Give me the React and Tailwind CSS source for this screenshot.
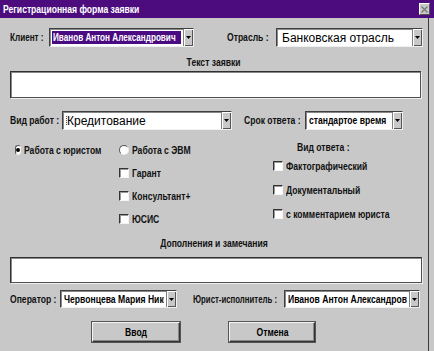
import React from 'react';

const narrow = "font-['Liberation_Sans',sans-serif]";

// condensed bold text, like the old narrow system font
function N({ children, center, sx = 'scale-x-[0.78]' }) {
  return (
    <span
      className={`${narrow} inline-block whitespace-nowrap text-[11px] font-bold leading-none ${sx} ${center ? 'origin-center' : 'origin-left'}`}
    >
      {children}
    </span>
  );
}

function DropBtn() {
  return (
    <div className="w-[10px] shrink-0 bg-[#c8c8c8] border-l border-[#808080] flex items-center justify-center shadow-[inset_1px_1px_0_#fff,inset_-1px_-1px_0_#555]">
      <svg width="5" height="3" viewBox="0 0 5 3">
        <path d="M0 0h5L2.5 3z" fill="#000" />
      </svg>
    </div>
  );
}

function Select({ className, children, purple }) {
  return (
    <div className={`flex h-full bg-white border border-t-[#404040] border-l-[#404040] border-b-[#f0f0f0] border-r-[#f0f0f0] shadow-[inset_1px_1px_0_#888] ${className}`}>
      <div className="flex-1 min-w-0 overflow-hidden flex items-center p-[2px]">
        <div className={`h-full w-full flex items-center px-[1px] whitespace-nowrap overflow-hidden ${purple ? 'bg-[#4a0a82] text-white' : 'text-black'}`}>
          {children}
        </div>
      </div>
      <DropBtn />
    </div>
  );
}

function Label({ className = '', children, center, sx }) {
  return (
    <div className={`text-[#111] flex items-center ${center ? 'justify-center' : ''} ${className}`}>
      <N center={center} sx={sx}>{children}</N>
    </div>
  );
}

function Radio({ checked, label }) {
  return (
    <div className="flex items-center h-[14px] gap-[3px]">
      <div className="w-[10px] h-[10px] rounded-full bg-white border border-t-[#555] border-l-[#555] border-b-[#eee] border-r-[#eee] flex items-center justify-center">
        {checked && <div className="w-[4px] h-[4px] rounded-full bg-black" />}
      </div>
      <Label>{label}</Label>
    </div>
  );
}

function Check({ label }) {
  return (
    <div className="flex items-center h-[14px] gap-[3px]">
      <div className="w-[10px] h-[10px] bg-white border border-t-[#333] border-l-[#333] border-b-[#f4f4f4] border-r-[#f4f4f4] shadow-[inset_1px_1px_0_#999]" />
      <Label>{label}</Label>
    </div>
  );
}

function Field({ className }) {
  return (
    <div className={`bg-white border border-t-[#303030] border-l-[#303030] border-b-[#505050] border-r-[#505050] shadow-[inset_1px_1px_0_#888,1px_1px_0_#eee] ${className}`} />
  );
}

function Button({ className, children }) {
  return (
    <div className={`h-[20px] flex items-center justify-center bg-[#c8c8c8] border border-t-[#f4f4f4] border-l-[#f4f4f4] border-b-[#333] border-r-[#333] shadow-[inset_-1px_-1px_0_#888,0_0_0_1px_#555] ${className}`}>
      <N center>{children}</N>
    </div>
  );
}

export default function App() {
  return (
    <div className="w-[434px] h-[351px] bg-[#c8c8c8] overflow-hidden flex flex-col">
      <div className="h-[18px] shrink-0 bg-[#4c0c7e] flex items-center justify-between pl-[3px] pr-[4px]">
        <div className="text-white flex items-center">
          <N>Регистрационная форма заявки</N>
        </div>
        <div className="w-[11px] h-[12px] bg-[#c8c8c8] border border-t-white border-l-white border-b-[#555] border-r-[#555] flex items-center justify-center">
          <svg width="7" height="7" viewBox="0 0 7 7">
            <path d="M0.5 0.5l6 6M6.5 0.5l-6 6" stroke="#777" strokeWidth="1.2" />
          </svg>
        </div>
      </div>

      <div className="w-[429px] flex-1 border-r border-[#3a3a3a] flex flex-col">
        <div className="flex items-center h-[19px] mt-[10px]">
          <Label className="ml-[10px] w-[39px]" sx="scale-x-[0.74]">Клиент :</Label>
          <Select className="w-[145px]" purple>
            <N sx="scale-x-[0.74]">Иванов Антон Александрович</N>
          </Select>
          <Label className="ml-[33px] w-[49px]">Отрасль :</Label>
          <Select className="w-[147px]">
            <span className="font-['Liberation_Sans',sans-serif] text-[12px] leading-none pl-[2px]">Банковская отрасль</span>
          </Select>
        </div>

        <Label center className="mt-[9px] h-[12px]">Текст заявки</Label>
        <Field className="mt-[3px] ml-[10px] w-[411px] h-[27px]" />

        <div className="flex items-center h-[19px] mt-[13px]">
          <Label className="ml-[10px] w-[52px]">Вид работ :</Label>
          <Select className="w-[170px]">
            <span className="w-[1px] h-[9px] border-l border-dotted border-[#555]" />
            <span className="font-['Liberation_Sans',sans-serif] text-[12px] leading-none">Кредитование</span>
          </Select>
          <Label className="ml-[12px] w-[61px]">Срок ответа :</Label>
          <Select className="w-[98px]">
            <N>стандартое время</N>
          </Select>
        </div>

        <div className="flex mt-[13px] h-[83px]">
          <div className="ml-[15px] w-[104px]">
            <Radio checked label="Работа с юристом" />
          </div>
          <div className="w-[154px] flex flex-col gap-[9px]">
            <Radio label="Работа с ЭВМ" />
            <Check label="Гарант" />
            <Check label="Консультант+" />
            <Check label="ЮСИС" />
          </div>
          <div className="flex flex-col">
            <Label className="ml-[24px] h-[14px] mt-[-3px]">Вид ответа :</Label>
            <div className="flex flex-col gap-[10px] mt-[5px]">
              <Check label="Фактографический" />
              <Check label="Документальный" />
              <Check label="с комментарием юриста" />
            </div>
          </div>
        </div>

        <Label center className="mt-[11px] h-[12px]">Дополнения и замечания</Label>
        <Field className="mt-[8px] ml-[10px] w-[412px] h-[26px]" />

        <div className="flex items-center h-[18px] mt-[7px]">
          <Label className="ml-[10px] w-[50px]">Оператор :</Label>
          <Select className="w-[117px]">
            <N>Червонцева Мария Николаевна</N>
          </Select>
          <Label className="ml-[16px] w-[91px]" sx="scale-x-[0.71]">Юрист-исполнитель :</Label>
          <Select className="w-[136px]">
            <N>Иванов Антон Александрович</N>
          </Select>
        </div>

        <div className="flex mt-[14px]">
          <Button className="ml-[92px] w-[88px]">Ввод</Button>
          <Button className="ml-[49px] w-[86px]">Отмена</Button>
        </div>
      </div>
    </div>
  );
}
